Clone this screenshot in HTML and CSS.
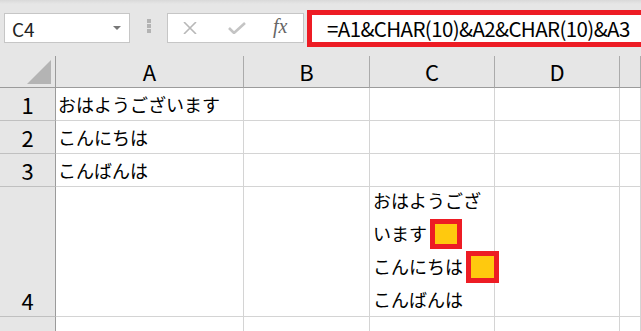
FILE: index.html
```html
<!DOCTYPE html>
<html lang="ja">
<head>
  <meta charset="UTF-8" />
  <title>CHAR(10)</title>
  <link rel="stylesheet" href="styles.css">
</head>
<body>
  <div class="barra">
    <div class="nome">
      <span>C4</span>
      <span class="seta"></span>
    </div>
    <div class="pontos"><i></i><i></i><i></i></div>
    <div class="botoes">
      <svg width="16" height="12" viewBox="0 0 16 12"><path d="M2 0 L14 12 M14 0 L2 12" stroke="#b8b8b8" stroke-width="1.6" fill="none"/></svg>
      <svg width="18" height="12" viewBox="0 0 18 12"><path d="M1 6 L6 11 L17 1" stroke="#c4c4c4" stroke-width="2.6" fill="none"/></svg>
      <span class="fx">fx</span>
    </div>
    <div class="formula">=A1&amp;CHAR(10)&amp;A2&amp;CHAR(10)&amp;A3</div>
  </div>

  <div class="planilha">
    <div class="canto"><span class="triangulo"></span></div>
    <div class="col">A</div>
    <div class="col">B</div>
    <div class="col">C</div>
    <div class="col">D</div>
    <div class="col ultima"></div>

    <div class="lin">1</div>
    <div class="cel">おはようございます</div>
    <div class="cel"></div>
    <div class="cel"></div>
    <div class="cel"></div>
    <div class="cel"></div>

    <div class="lin">2</div>
    <div class="cel">こんにちは</div>
    <div class="cel"></div>
    <div class="cel"></div>
    <div class="cel"></div>
    <div class="cel"></div>

    <div class="lin">3</div>
    <div class="cel">こんばんは</div>
    <div class="cel"></div>
    <div class="cel"></div>
    <div class="cel"></div>
    <div class="cel"></div>

    <div class="lin">4</div>
    <div class="cel"></div>
    <div class="cel"></div>
    <div class="cel multi">
      <div>おはようござ<br>います<span class="quebra"></span><br>こんにちは<span class="quebra q2"></span><br>こんばんは</div>
    </div>
    <div class="cel"></div>
    <div class="cel"></div>

    <div class="lin">5</div>
    <div class="cel"></div>
    <div class="cel"></div>
    <div class="cel"></div>
    <div class="cel"></div>
    <div class="cel"></div>
  </div>
</body>
</html>
```

FILE: styles.css
```css
body {
  margin: 0;
  background: #e6e6e6;
  font-family: 'Noto Sans CJK JP', sans-serif;
  color: #000;
  overflow: hidden;
}

.barra {
  height: 56px;
  box-sizing: border-box;
  background: linear-gradient(to bottom, #d9d9d9, #e6e6e6 4px);
  display: flex;
  align-items: flex-start;
  padding: 10px 0 0 4px;
}

.nome {
  margin-top: 3px;
  width: 126px;
  height: 30px;
  box-sizing: border-box;
  background: #fff;
  border: 1px solid #c6c6c6;
  display: flex;
  align-items: center;
  justify-content: space-between;
  padding: 0 8px 0 7px;
  font-size: 19px;
  color: #222;
}

.seta {
  width: 0;
  height: 0;
  border-left: 4px solid transparent;
  border-right: 4px solid transparent;
  border-top: 4px solid #777;
}

.pontos {
  margin: 9px 16px 0 17px;
  display: flex;
  flex-direction: column;
  gap: 1px;
}

.pontos i {
  width: 4px;
  height: 4px;
  background: #b3b3b3;
}

.botoes {
  margin-top: 3px;
  width: 137px;
  height: 30px;
  box-sizing: border-box;
  background: #fff;
  border: 1px solid #c6c6c6;
  display: flex;
  align-items: center;
  padding: 0 0 0 14px;
  gap: 30px;
}

.fx {
  font-family: 'Liberation Serif', serif;
  font-style: italic;
  font-size: 20px;
  color: #666;
  margin-left: -3px;
  margin-top: -4px;
}

.formula {
  margin-left: 3px;
  flex: 1;
  height: 37px;
  box-sizing: border-box;
  border: 5px solid #ed1c24;
  border-right-width: 0;
  background: #fff;
  font-size: 20.5px;
  letter-spacing: -0.6px;
  line-height: 26px;
  padding-left: 15px;
  white-space: nowrap;
  overflow: hidden;
}

.planilha {
  display: grid;
  grid-template-columns: 56px 188px 126px 125px 125px 1fr;
  grid-template-rows: 32px 33px 33px 33px 130px 40px;
  background: #fff;
}

.planilha > div {
  box-sizing: border-box;
}

.canto,
.col {
  background: #e6e6e6;
  border-bottom: 1px solid #9b9b9b;
}

.canto {
  border-right: 1px solid #9b9b9b;
  display: flex;
  justify-content: flex-end;
  align-items: flex-end;
  padding: 0 4px 3px 0;
}

.triangulo {
  width: 24px;
  height: 24px;
  background: #b4b4b4;
  clip-path: polygon(100% 0, 100% 100%, 0 100%);
}

.col {
  border-right: 1px solid #ababab;
  text-align: center;
  font-size: 22px;
  line-height: 31px;
}

.lin {
  background: #e6e6e6;
  border-right: 1px solid #9b9b9b;
  border-bottom: 1px solid #c0c0c0;
  text-align: center;
  font-size: 22px;
  line-height: 32px;
  display: flex;
  align-items: flex-end;
  justify-content: center;
}

.cel {
  border-right: 1px solid #d4d4d4;
  border-bottom: 1px solid #d4d4d4;
  font-size: 18px;
  line-height: 32px;
  padding-left: 2px;
  white-space: nowrap;
}

.multi {
  display: flex;
  align-items: flex-end;
  padding-left: 3px;
  position: relative;
  z-index: 1;
}

.multi > div {
  line-height: 33px;
}

.quebra {
  display: inline-block;
  width: 32px;
  height: 30px;
  box-sizing: border-box;
  border: 5px solid #ed1c24;
  background: #ffc90e;
  vertical-align: middle;
  margin-left: 3px;
  margin-top: -4px;
}

.q2 {
  width: 33px;
  height: 32px;
}
```
